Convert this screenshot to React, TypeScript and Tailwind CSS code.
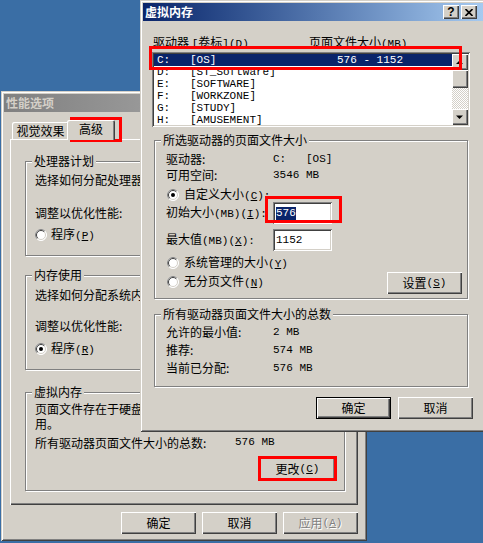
import React from 'react';

// classic 3D bevels
const btn3d = 'bg-[#d4d0c8] shadow-[inset_1px_1px_#fff,inset_-1px_-1px_#404040,inset_-2px_-2px_#808080]';
const btnDefault = 'bg-[#d4d0c8] shadow-[inset_1px_1px_#000,inset_-1px_-1px_#000,inset_2px_2px_#fff,inset_-2px_-2px_#404040,inset_-3px_-3px_#808080]';
const sunken = 'bg-white shadow-[inset_1px_1px_#808080,inset_-1px_-1px_#fff,inset_2px_2px_#404040,inset_-2px_-2px_#d4d0c8]';
const frame = 'bg-[#d4d0c8] shadow-[inset_1px_1px_#d4d0c8,inset_-1px_-1px_#404040,inset_2px_2px_#fff,inset_-2px_-2px_#808080]';
const tabEdge = 'bg-[#d4d0c8] rounded-t-[2px] shadow-[inset_1px_1px_#fff,inset_-1px_0_#404040,inset_-2px_0_#808080]';
const mono = "font-['Liberation_Mono',monospace] text-[11px]";

type Kids = { children?: React.ReactNode };

const A = ({ children }: Kids) => <span className={mono}>{children}</span>;
const U = ({ children }: Kids) => <span className="underline underline-offset-[1px]">{children}</span>;

const Radio = ({ checked = false }: { checked?: boolean }) => (
  <svg width="12" height="12" viewBox="0 0 12 12" className="shrink-0">
    <circle cx="6" cy="6" r="5.5" fill="#fff" stroke="#fff" />
    <path d="M2.1 9.9A5.5 5.5 0 0 1 9.9 2.1" stroke="#808080" fill="none" />
    <path d="M2.8 9.2A4.5 4.5 0 0 1 9.2 2.8" stroke="#404040" fill="none" />
    <path d="M2.8 9.2A4.5 4.5 0 0 0 9.2 2.8" stroke="#d4d0c8" fill="none" />
    {checked && <circle cx="6" cy="6" r="2" fill="#000" />}
  </svg>
);

const CapBtn = ({ children }: Kids) => (
  <div className={`w-[16px] h-[14px] flex items-center justify-center ${btn3d}`}>{children}</div>
);

const Caption = ({ title, active }: { title: string; active?: boolean }) => (
  <div
    className={`h-[18px] shrink-0 flex items-center pl-[2px] pr-[6px] ${
      active ? 'bg-linear-to-r from-[#0a246a] to-[#a6caf0]' : 'bg-linear-to-r from-[#808080] to-[#c0c0c0]'
    }`}
  >
    <span className={`font-bold text-[12px] leading-[18px] ${active ? 'text-white' : 'text-[#d4d0c8]'}`}>{title}</span>
    <div className="ml-auto flex gap-[2px]">
      <CapBtn>
        <span className="font-['Liberation_Sans',sans-serif] font-bold text-[12px] leading-none text-black">?</span>
      </CapBtn>
      <CapBtn>
        <svg width="8" height="7" viewBox="0 0 8 7">
          <path d="M0.5 0L7.5 7M7.5 0L0.5 7" stroke="#000" strokeWidth="1.6" />
        </svg>
      </CapBtn>
    </div>
  </div>
);

const Button = ({
  children,
  className = '',
  isDefault,
  disabled,
}: Kids & { className?: string; isDefault?: boolean; disabled?: boolean }) => (
  <div
    className={`w-[75px] h-[22px] flex items-center justify-center leading-[16px] ${isDefault ? btnDefault : btn3d} ${
      disabled ? 'text-[#808080] [text-shadow:1px_1px_0_#fff]' : ''
    } ${className}`}
  >
    {children}
  </div>
);

const GroupBox = ({ title, className = '', children }: Kids & { title: string; className?: string }) => (
  <div className={`relative border border-[#808080] shadow-[inset_1px_1px_#fff,1px_1px_#fff] ${className}`}>
    <div className="absolute -top-[9px] left-[6px] bg-[#d4d0c8] px-[2px] leading-[16px] whitespace-nowrap">{title}</div>
    {children}
  </div>
);

const RedBox = ({ className }: { className: string }) => (
  <div className={`absolute border-[3px] border-[#ff0000] ${className}`} />
);

const drives = [
  ['C:', '[OS]', '576 - 1152'],
  ['D:', '[ST_Software]', ''],
  ['E:', '[SOFTWARE]', ''],
  ['F:', '[WORKZONE]', ''],
  ['G:', '[STUDY]', ''],
  ['H:', '[AMUSEMENT]', ''],
];

function PerfOptions() {
  return (
    <div className={`absolute left-[1px] top-[91px] w-[366px] h-[450px] p-[3px] flex flex-col ${frame}`}>
      <Caption title="性能选项" />

      {/* tabs */}
      <div className="ml-[6px] mt-[8px] h-[19px] flex items-end pl-[2px]">
        <div className={`w-[57px] h-[17px] text-center leading-[17px] ${tabEdge}`}>视觉效果</div>
        <div className={`-ml-[2px] w-[48px] h-[20px] -mb-[1px] relative z-10 text-center pt-[1px] leading-[16px] ${tabEdge}`}>
          高级
        </div>
      </div>

      <div className={`ml-[6px] w-[348px] h-[366px] pt-[22px] pl-[15px] flex flex-col ${btn3d}`}>
        <GroupBox title="处理器计划" className="w-[320px] h-[95px] pl-[9px] pt-[10px]">
          <div className="h-[15px] leading-[15px] whitespace-nowrap">选择如何分配处理器</div>
          <div className="mt-[18px] h-[15px] leading-[15px]">调整以优化性能:</div>
          <div className="mt-[7px] h-[15px] flex items-center gap-[4px]">
            <Radio />
            <span>
              程序<A>(<U>P</U>)</A>
            </span>
          </div>
        </GroupBox>

        <GroupBox title="内存使用" className="mt-[19px] w-[320px] h-[95px] pl-[9px] pt-[11px]">
          <div className="h-[15px] leading-[15px] whitespace-nowrap">选择如何分配系统内</div>
          <div className="mt-[16px] h-[15px] leading-[15px]">调整以优化性能:</div>
          <div className="mt-[8px] h-[15px] flex items-center gap-[4px]">
            <Radio checked />
            <span>
              程序<A>(<U>R</U>)</A>
            </span>
          </div>
        </GroupBox>

        <GroupBox title="虚拟内存" className="mt-[22px] w-[320px] h-[99px] pl-[9px] pt-[8px]">
          <div className="h-[15px] leading-[15px] whitespace-nowrap">页面文件存在于硬盘</div>
          <div className="h-[15px] leading-[15px]">用。</div>
          <div className="mt-[4px] h-[15px] leading-[15px] flex whitespace-nowrap">
            <span className="w-[200px]">所有驱动器页面文件大小的总数:</span>
            <A>576 MB</A>
          </div>
          <div className="mt-[8px] flex justify-end pr-[9px]">
            <Button>
              更改<A>(<U>C</U>)</A>
            </Button>
          </div>
        </GroupBox>
      </div>

      <div className="ml-[6px] mt-[7px] w-[348px] flex justify-end gap-[6px]">
        <Button>确定</Button>
        <Button>取消</Button>
        <Button disabled>
          应用<A>(<U>A</U>)</A>
        </Button>
      </div>
    </div>
  );
}

function VirtualMemory() {
  return (
    <div className={`absolute left-[140px] top-0 w-[346px] h-[432px] p-[3px] flex flex-col ${frame}`}>
      <Caption title="虚拟内存" active />

      <div className="mt-[13px] h-[16px] flex leading-[16px] whitespace-nowrap">
        <span className="ml-[10px] w-[156px]">
          驱动器 <A>[</A>卷标<A>](<U>D</U>)</A>
        </span>
        <span>
          页面文件大小<A>(MB)</A>
        </span>
      </div>

      {/* drive list */}
      <div className={`ml-[9px] mt-[2px] w-[318px] h-[75px] p-[2px] flex ${sunken}`}>
        <div className={`flex-1 flex flex-col overflow-hidden ${mono}`}>
          {drives.map(([d, label, size], i) => (
            <div
              key={d}
              className={`h-[12px] shrink-0 flex items-center pl-[3px] leading-[12px] ${
                i === 0 ? 'bg-[#0a246a] text-white' : 'text-black'
              }`}
            >
              <span className="w-[33px]">{d}</span>
              <span className="w-[147px]">{label}</span>
              <span>{size}</span>
            </div>
          ))}
        </div>
        <div className="w-[16px] flex flex-col">
          <div className={`h-[16px] ${btn3d}`}>
            <svg width="16" height="16" viewBox="0 0 16 16">
              <polygon points="4,10 11,10 7.5,6.5" fill="#000" />
            </svg>
          </div>
          <div className={`h-[18px] ${btn3d}`} />
          <div className="h-[21px] bg-[repeating-conic-gradient(#fff_0_25%,#d4d0c8_0_50%)] bg-[length:2px_2px]" />
          <div className={`h-[16px] ${btn3d}`}>
            <svg width="16" height="16" viewBox="0 0 16 16">
              <polygon points="4,6.5 11,6.5 7.5,10" fill="#000" />
            </svg>
          </div>
        </div>
      </div>

      <GroupBox title="所选驱动器的页面文件大小" className="ml-[11px] mt-[13px] w-[314px] h-[159px] pl-[11px] pr-[5px] pt-[10px]">
        <div className="h-[16px] flex items-center leading-[16px]">
          <span className="w-[107px]">驱动器:</span>
          <A>C:&nbsp;&nbsp;&nbsp;[OS]</A>
        </div>
        <div className="h-[16px] flex items-center leading-[16px]">
          <span className="w-[107px]">可用空间:</span>
          <A>3546 MB</A>
        </div>
        <div className="mt-[5px] h-[14px] flex items-center gap-[5px] pl-[1px]">
          <Radio checked />
          <span className="leading-[14px]">
            自定义大小<A>(<U>C</U>):</A>
          </span>
        </div>
        <div className="h-[22px] flex items-center">
          <span className="w-[107px] leading-[16px]">
            初始大小<A>(MB)(<U>I</U>):</A>
          </span>
          <div className={`w-[59px] h-[22px] pl-[3px] flex items-center ${sunken}`}>
            <span className={`${mono} bg-[#0a246a] text-white leading-[13px]`}>576</span>
          </div>
        </div>
        <div className="mt-[5px] h-[22px] flex items-center">
          <span className="w-[107px] leading-[16px]">
            最大值<A>(MB)(<U>X</U>):</A>
          </span>
          <div className={`w-[59px] h-[22px] pl-[3px] flex items-center ${sunken}`}>
            <span className={`${mono} leading-[13px]`}>1152</span>
          </div>
        </div>
        <div className="mt-[2px] flex justify-between">
          <div className="flex flex-col pl-[1px]">
            <div className="h-[19px] flex items-center gap-[5px]">
              <Radio />
              <span>
                系统管理的大小<A>(<U>Y</U>)</A>
              </span>
            </div>
            <div className="h-[19px] flex items-center gap-[5px]">
              <Radio />
              <span>
                无分页文件<A>(<U>N</U>)</A>
              </span>
            </div>
          </div>
          <Button className="mt-[19px]">
            设置<A>(<U>S</U>)</A>
          </Button>
        </div>
      </GroupBox>

      <GroupBox title="所有驱动器页面文件大小的总数" className="ml-[11px] mt-[15px] w-[314px] h-[73px] pl-[11px] pt-[8px]">
        <div className="h-[18px] flex items-center leading-[16px]">
          <span className="w-[107px]">允许的最小值:</span>
          <A>2 MB</A>
        </div>
        <div className="h-[18px] flex items-center leading-[16px]">
          <span className="w-[107px]">推荐:</span>
          <A>574 MB</A>
        </div>
        <div className="h-[18px] flex items-center leading-[16px]">
          <span className="w-[107px]">当前已分配:</span>
          <A>576 MB</A>
        </div>
      </GroupBox>

      <div className="mt-[10px] ml-[173px] flex gap-[7px]">
        <Button isDefault>确定</Button>
        <Button>取消</Button>
      </div>
    </div>
  );
}

export default function App() {
  return (
    <div className="relative w-[483px] h-[543px] overflow-hidden bg-[#3a6ea5] text-black text-[12px] leading-[16px] font-['Noto_Sans_CJK_SC','Noto_Sans',sans-serif]">
      <PerfOptions />
      <VirtualMemory />

      {/* red annotation boxes */}
      <RedBox className="left-[149px] top-[46px] w-[313px] h-[24px]" />
      <RedBox className="left-[265px] top-[196px] w-[77px] h-[27px]" />
      <RedBox className="left-[70px] top-[117px] w-[52px] h-[25px]" />
      <RedBox className="left-[258px] top-[456px] w-[79px] h-[25px]" />
    </div>
  );
}
